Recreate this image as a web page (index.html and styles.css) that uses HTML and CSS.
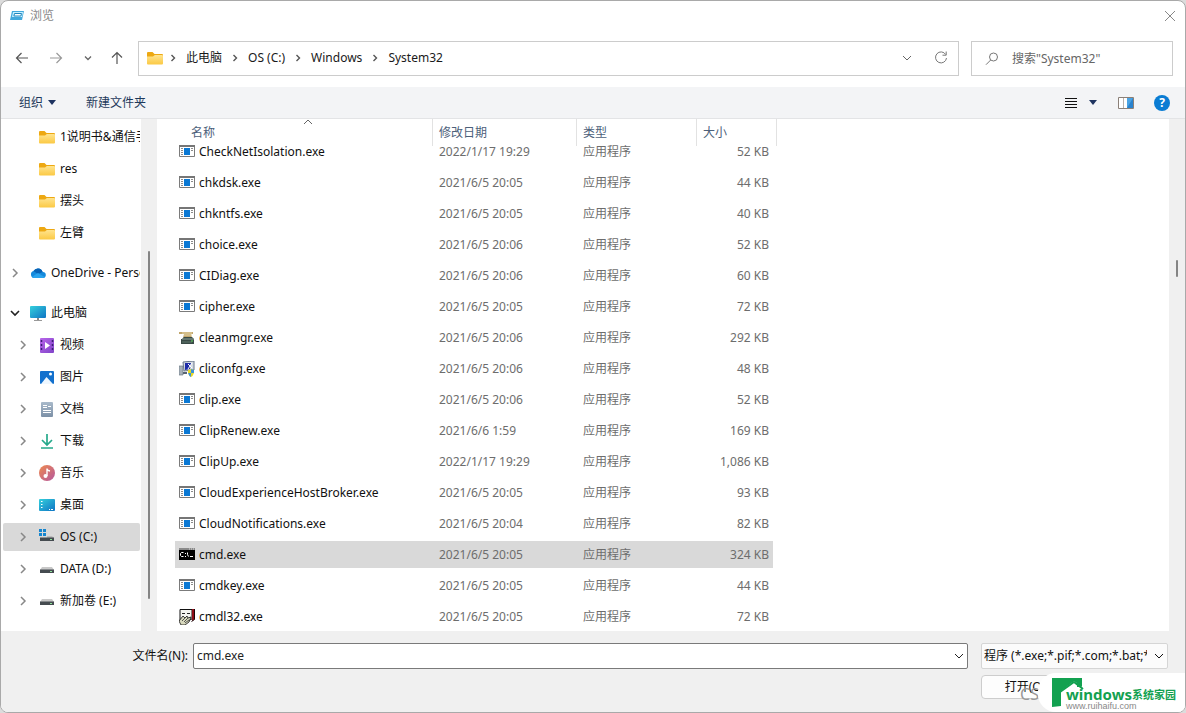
FILE: index.html
```html
<!DOCTYPE html>
<html lang="zh-CN">
<head>
<meta charset="utf-8">
<title>浏览</title>
<link rel="stylesheet" href="styles.css">
</head>
<body>
<svg class="defs" width="0" height="0" aria-hidden="true">
  <defs>
    <linearGradient id="gFolder" x1="0" y1="0" x2="0" y2="1"><stop offset="0" stop-color="#ffe48f"/><stop offset="1" stop-color="#fbc944"/></linearGradient>
    <linearGradient id="gScreen" x1="0" y1="0" x2="1" y2="1"><stop offset="0" stop-color="#35d0dc"/><stop offset="1" stop-color="#0f74c4"/></linearGradient>
    <linearGradient id="gMusic" x1="0" y1="0" x2="1" y2="1"><stop offset="0" stop-color="#ee8a4e"/><stop offset="1" stop-color="#b5579f"/></linearGradient>
    <linearGradient id="gVideo" x1="0" y1="0" x2="1" y2="1"><stop offset="0" stop-color="#b866ea"/><stop offset="1" stop-color="#8044c8"/></linearGradient>
    <linearGradient id="gDoc" x1="0" y1="0" x2="0" y2="1"><stop offset="0" stop-color="#a9bacb"/><stop offset="1" stop-color="#7c90a6"/></linearGradient>
    <symbol id="folder" viewBox="0 0 16 16"><path d="M0 3q0-1 1-1h4.500l2 2H15q1 0 1 1v3H0z" fill="#eda812"/><path d="M0 6.500h6l1.800-1.500H15q1 0 1 1v7.500q0 1-1 1H1q-1 0-1-1z" fill="url(#gFolder)"/></symbol>
    <symbol id="exe" viewBox="0 1 16 16"><path d="M.5 2.500h15v11H.5z" fill="#fff" stroke="#7b7b7b"/><path d="M0 2h16v2H0z" fill="#767676"/><path d="M5 5h6v7H5z" fill="#0a78d4"/><path d="M2 5.500h2M2 7.500h2M2 9.500h2M2 11.500h2M12 5.500h2M12 7.500h2" stroke="#8c8c8c"/></symbol>
    <symbol id="cmd" viewBox="0 1 16 16"><path d="M0 2h16v12H0z" fill="#000"/><path d="M0 2h16v2H0z" fill="#8a8a8a"/><path d="M10 3h1M12 3h1M14 3h1" stroke="#ddd"/><path d="M4.500 6.500H2.500L1.500 7.500v2l1 1h2M6.500 7v1M6.500 10v1M8.500 6.500v2l1 2M11 10.500h3" stroke="#fff" fill="none"/></symbol>
    <symbol id="clean" viewBox="0 0 16 16"><path d="M0 2h14v2h-2l1 4H4l1-4H0z" fill="#c1a66c"/><path d="M3 3h10M5 5h8" stroke="#e8d7a8"/><path d="M3 9l2-2h8l2 2v5H2V9z" fill="#394a46"/><path d="M3 9h12" stroke="#91a49b"/><path d="M3 12h10" stroke="#62786f"/><path d="M12 11h2" stroke="#61d85c"/></symbol>
    <symbol id="conf" viewBox="0 0 16 16"><path d="M0 5h4v9H0z" fill="#a7b0b8" stroke="#6f7c88" stroke-width=".7"/><path d="M4 1l11-1v9l-10 1z" fill="#d4dbe4" stroke="#68768c"/><path d="M6 2h6l-1 6-5 1z" fill="#1e2ba7"/><path d="M9 3l4 4M13 2l-4 6" stroke="#fff"/><path d="M9 9l3-1 3 1v3q-1 3-3 4-2-1-3-4z" fill="#e8d922"/><path d="M12 8l3 1v3h-3zM9 12h3v4q-2-1-3-4z" fill="#3c93d9"/><path d="M4 12h4" stroke="#5a6572" stroke-width="2"/></symbol>
    <symbol id="cmdl" viewBox="0 0 16 16"><path d="M1 .5h12V10l-5 2H1z" fill="#f4f4f0" stroke="#111"/><path d="M13 0h3v10l-3 2z" fill="#8e0d18"/><path d="M15.500 0v10.500l-3 2" fill="none" stroke="#180407"/><path d="M3 4.500h3M8 4.500h3" stroke="#222"/><path d="M0 12l4-5 2 2 2-2 1 2 3-1-2 5-4 3H2z" fill="#d7d8bd" stroke="#111" stroke-width=".8"/><path d="M3 12l3-3M5 13l4-4M6 14l4-3" stroke="#333" stroke-width=".8"/></symbol>
    <symbol id="chev" viewBox="0 0 16 16"><path d="M6 4l4 4-4 4" fill="none" stroke="currentColor" stroke-width="1.500"/></symbol>
    <symbol id="chevSmall" viewBox="0 0 16 16"><path d="M6.500 5l3 3-3 3" fill="none" stroke="currentColor" stroke-width="1.400"/></symbol>
    <symbol id="chevDown" viewBox="0 0 16 16"><path d="M4 6l4 4 4-4" fill="none" stroke="currentColor"/></symbol>
    <symbol id="drive" viewBox="0 0 16 16"><path d="M3 6h10l2 3H1z" fill="#c8c8c8"/><path d="M1 8.500h14V12H1z" fill="#454b50"/><path d="M11 10.500h2" stroke="#8ee39a"/></symbol>
  </defs>
</svg>

<main class="window">
  <header class="titlebar">
    <svg class="icon" viewBox="0 0 16 16"><path d="M3 3h12l-2 9H1z" fill="#42a8dc"/><path d="M4 4h10l-1 5H3z" fill="#c5efff"/><path d="M5.500 5.500h7l-.6 2.500h-7z" fill="#fff" stroke="#1e86be"/></svg>
    <h1 class="title">浏览</h1>
    <button class="plain close" aria-label="关闭"><svg class="icon" viewBox="0 0 16 16"><path d="M3 3l10 10M13 3L3 13" stroke="#888" fill="none"/></svg></button>
  </header>

  <nav class="navbar">
    <div class="history">
      <button class="plain" aria-label="后退"><svg class="icon" viewBox="0 0 16 16"><path d="M14 8H2.500M7.500 3l-5 5 5 5" fill="none" stroke="#555" stroke-width="1.200"/></svg></button>
      <button class="plain" aria-label="前进"><svg class="icon" viewBox="0 0 16 16"><path d="M2 8h11.500M8.500 3l5 5-5 5" fill="none" stroke="#999" stroke-width="1.200"/></svg></button>
      <button class="plain narrow" aria-label="最近位置"><svg class="icon" viewBox="0 0 16 16"><path d="M5 6.500l3 3 3-3" fill="none" stroke="#666" stroke-width="1.300"/></svg></button>
      <button class="plain narrow" aria-label="上移"><svg class="icon" viewBox="0 0 16 16"><path d="M8 14V2.500M3 7.500l5-5 5 5" fill="none" stroke="#555" stroke-width="1.200"/></svg></button>
    </div>
    <div class="address">
      <svg class="icon"><use href="#folder"/></svg>
      <svg class="icon sep first"><use href="#chevSmall"/></svg>
      <a class="crumb" href="#">此电脑</a>
      <svg class="icon sep"><use href="#chevSmall"/></svg>
      <a class="crumb" href="#">OS (C:)</a>
      <svg class="icon sep"><use href="#chevSmall"/></svg>
      <a class="crumb" href="#">Windows</a>
      <svg class="icon sep"><use href="#chevSmall"/></svg>
      <a class="crumb" href="#">System32</a>
      <div class="address-tools">
        <button class="plain" aria-label="历史记录"><svg class="icon"><use href="#chevDown"/></svg></button>
        <button class="plain" aria-label="刷新"><svg class="icon" viewBox="0 0 16 16"><path d="M12.700 4.500A5.500 5.500 0 1 0 13.500 8M13.200 1.500v3.700H9.500" fill="none" stroke="#777"/></svg></button>
      </div>
    </div>
    <label class="search">
      <svg class="icon" viewBox="0 0 16 16"><circle cx="9.500" cy="6" r="4" fill="none" stroke="#777"/><path d="M6.700 9L2 13.700" stroke="#777"/></svg>
      <input type="text" placeholder='搜索"System32"' aria-label="搜索">
    </label>
  </nav>

  <div class="toolbar">
    <button class="plain command">组织 <span class="caret"></span></button>
    <button class="plain command">新建文件夹</button>
    <div class="view-tools">
      <button class="plain" aria-label="视图"><svg class="icon" viewBox="0 0 16 16"><path d="M2 3.500h12M2 6.500h12M2 9.500h12M2 12.500h12" stroke="#111"/></svg></button>
      <button class="plain view-caret" aria-label="更多选项"><span class="caret"></span></button>
      <button class="plain" aria-label="预览窗格"><svg class="icon" viewBox="0 0 16 16"><path d="M.5 2.500h15v11H.5z" fill="#fff" stroke="#8b8078"/><path d="M9 3h6v10H9z" fill="#4ba3e3"/><path d="M9 13l6-10v10z" fill="#2a83ce"/><path d="M5.500 3v10" stroke="#b9b2ad"/></svg></button>
      <button class="plain" aria-label="帮助"><span class="help">?</span></button>
    </div>
  </div>

  <div class="content">
    <aside class="tree">
      <a class="node leaf" href="#"><svg class="icon"><use href="#folder"/></svg><span>1说明书&amp;通信手册</span></a>
      <a class="node leaf" href="#"><svg class="icon"><use href="#folder"/></svg><span>res</span></a>
      <a class="node leaf" href="#"><svg class="icon"><use href="#folder"/></svg><span>摆头</span></a>
      <a class="node leaf" href="#"><svg class="icon"><use href="#folder"/></svg><span>左臂</span></a>
      <a class="node root" href="#"><svg class="icon arrow"><use href="#chev"/></svg><svg class="icon" viewBox="0 0 16 16"><path d="M4 13a3.600 3.600 0 0 1-.5-7A5 5 0 0 1 12.600 7 3 3 0 0 1 13 13z" fill="#1489dc"/><path d="M3.500 6A5 5 0 0 1 12.600 7L8 9z" fill="#0862b5"/><path d="M2 12q4-3 6-4 3 2 7 4-1 1-2 1H4q-1 0-2-1z" fill="#29a3ee"/></svg><span>OneDrive - Personal</span></a>
      <a class="node root" href="#"><svg class="icon arrow expanded" viewBox="0 0 16 16"><path d="M4 6l4 4 4-4" fill="none" stroke="currentColor" stroke-width="1.600"/></svg><svg class="icon" viewBox="0 0 16 16"><rect y="1" width="16" height="12" rx="1" fill="url(#gScreen)"/><path d="M7 13h2v2H7z" fill="#888"/><path d="M4 15.500h8" stroke="#999"/></svg><span>此电脑</span></a>
      <a class="node child" href="#"><svg class="icon arrow"><use href="#chev"/></svg><svg class="icon" viewBox="0 0 16 16"><rect x="1" y="1" width="14" height="15" rx="1" fill="url(#gVideo)"/><path d="M2.500 3v12M13.500 3v12" stroke="#3c1d77" stroke-width="1.500" stroke-dasharray="2 2"/><path d="M6 5l5 3.500L6 12z" fill="#fff"/></svg><span>视频</span></a>
      <a class="node child" href="#"><svg class="icon arrow"><use href="#chev"/></svg><svg class="icon" viewBox="0 0 16 16"><rect x="1" y="2" width="14" height="13" rx="1" fill="#1270cd"/><path d="M2 15l5.500-7L14 15z" fill="#eef7ff"/><circle cx="11.500" cy="5" r="1.500" fill="#fff"/></svg><span>图片</span></a>
      <a class="node child" href="#"><svg class="icon arrow"><use href="#chev"/></svg><svg class="icon" viewBox="0 0 16 16"><rect x="2" y="1" width="12" height="15" rx="1" fill="url(#gDoc)"/><path d="M4 4.500h4M4 6.500h4M9 5.500h3M4 9.500h8M4 11.500h8" stroke="#fff"/></svg><span>文档</span></a>
      <a class="node child" href="#"><svg class="icon arrow"><use href="#chev"/></svg><svg class="icon" viewBox="0 0 16 16"><path d="M8 1v10.500M3 7l5 5 5-5M2 15h12" fill="none" stroke="#25a98b" stroke-width="1.700"/></svg><span>下载</span></a>
      <a class="node child" href="#"><svg class="icon arrow"><use href="#chev"/></svg><svg class="icon" viewBox="0 0 16 16"><circle cx="8" cy="8" r="8" fill="url(#gMusic)"/><path d="M8 3.500v7.500M8 3.500q0 2 3 2.500" stroke="#fff" stroke-width="1.400" fill="none"/><circle cx="6.500" cy="11" r="2" fill="#fff"/></svg><span>音乐</span></a>
      <a class="node child" href="#"><svg class="icon arrow"><use href="#chev"/></svg><svg class="icon" viewBox="0 0 16 16"><rect y="2" width="16" height="12" rx="1" fill="url(#gScreen)"/><path d="M2 4.500h1.500M2 7.500h1.500M2 10.500h1.500M10 12.500h1M12 12.500h2" stroke="#fff"/></svg><span>桌面</span></a>
      <a class="node child selected" href="#"><svg class="icon arrow"><use href="#chev"/></svg><svg class="icon" viewBox="0 0 16 16"><path d="M0 0h3v3H0zM4 0h3v3H4zM0 4h3v3H0zM4 4h3v3H4z" fill="#1585cf"/><path d="M8 7h5l2 2H8z" fill="#bbb"/><path d="M1 8.500h14V12H1z" fill="#454b50"/><path d="M11 10.500h2" stroke="#8ee39a"/></svg><span>OS (C:)</span></a>
      <a class="node child" href="#"><svg class="icon arrow"><use href="#chev"/></svg><svg class="icon"><use href="#drive"/></svg><span>DATA (D:)</span></a>
      <a class="node child" href="#"><svg class="icon arrow"><use href="#chev"/></svg><svg class="icon"><use href="#drive"/></svg><span>新加卷 (E:)</span></a>
    </aside>
    <div class="scroll tree-scroll"><div class="thumb"></div></div>

    <section class="files">
      <table class="list">
        <colgroup><col class="c-name"><col class="c-date"><col class="c-type"><col class="c-size"></colgroup>
        <thead><tr>
          <th><span class="head head-name">名称<svg class="sort" viewBox="0 0 10 6"><path d="M1 5l4-4 4 4" fill="none" stroke="#666"/></svg></span></th>
          <th><span class="head">修改日期</span></th><th><span class="head">类型</span></th><th><span class="head">大小</span></th>
        </tr></thead>
        <tbody>
          <tr><td><span class="file"><svg class="icon"><use href="#exe"/></svg>CheckNetIsolation.exe</span></td><td>2022/1/17 19:29</td><td>应用程序</td><td>52 KB</td></tr>
          <tr><td><span class="file"><svg class="icon"><use href="#exe"/></svg>chkdsk.exe</span></td><td>2021/6/5 20:05</td><td>应用程序</td><td>44 KB</td></tr>
          <tr><td><span class="file"><svg class="icon"><use href="#exe"/></svg>chkntfs.exe</span></td><td>2021/6/5 20:05</td><td>应用程序</td><td>40 KB</td></tr>
          <tr><td><span class="file"><svg class="icon"><use href="#exe"/></svg>choice.exe</span></td><td>2021/6/5 20:06</td><td>应用程序</td><td>52 KB</td></tr>
          <tr><td><span class="file"><svg class="icon"><use href="#exe"/></svg>CIDiag.exe</span></td><td>2021/6/5 20:06</td><td>应用程序</td><td>60 KB</td></tr>
          <tr><td><span class="file"><svg class="icon"><use href="#exe"/></svg>cipher.exe</span></td><td>2021/6/5 20:05</td><td>应用程序</td><td>72 KB</td></tr>
          <tr><td><span class="file"><svg class="icon"><use href="#clean"/></svg>cleanmgr.exe</span></td><td>2021/6/5 20:06</td><td>应用程序</td><td>292 KB</td></tr>
          <tr><td><span class="file"><svg class="icon"><use href="#conf"/></svg>cliconfg.exe</span></td><td>2021/6/5 20:06</td><td>应用程序</td><td>48 KB</td></tr>
          <tr><td><span class="file"><svg class="icon"><use href="#exe"/></svg>clip.exe</span></td><td>2021/6/5 20:06</td><td>应用程序</td><td>52 KB</td></tr>
          <tr><td><span class="file"><svg class="icon"><use href="#exe"/></svg>ClipRenew.exe</span></td><td>2021/6/6 1:59</td><td>应用程序</td><td>169 KB</td></tr>
          <tr><td><span class="file"><svg class="icon"><use href="#exe"/></svg>ClipUp.exe</span></td><td>2022/1/17 19:29</td><td>应用程序</td><td>1,086 KB</td></tr>
          <tr><td><span class="file"><svg class="icon"><use href="#exe"/></svg>CloudExperienceHostBroker.exe</span></td><td>2021/6/5 20:05</td><td>应用程序</td><td>93 KB</td></tr>
          <tr><td><span class="file"><svg class="icon"><use href="#exe"/></svg>CloudNotifications.exe</span></td><td>2021/6/5 20:04</td><td>应用程序</td><td>82 KB</td></tr>
          <tr class="selected"><td><span class="file"><svg class="icon"><use href="#cmd"/></svg>cmd.exe</span></td><td>2021/6/5 20:05</td><td>应用程序</td><td>324 KB</td></tr>
          <tr><td><span class="file"><svg class="icon"><use href="#exe"/></svg>cmdkey.exe</span></td><td>2021/6/5 20:05</td><td>应用程序</td><td>44 KB</td></tr>
          <tr><td><span class="file"><svg class="icon"><use href="#cmdl"/></svg>cmdl32.exe</span></td><td>2021/6/5 20:05</td><td>应用程序</td><td>72 KB</td></tr>
        </tbody>
      </table>
    </section>
    <div class="scroll list-scroll"><div class="thumb"></div></div>
  </div>

  <footer class="footer">
    <label class="name-label" for="filename">文件名(N):</label>
    <div class="combo"><input id="filename" type="text" value="cmd.exe"><button class="plain" aria-label="展开"><svg class="icon"><use href="#chevDown"/></svg></button></div>
    <div class="filter"><select aria-label="文件类型"><option>程序 (*.exe;*.pif;*.com;*.bat;*.cmd)</option></select><svg class="icon"><use href="#chevDown"/></svg></div>
    <button class="open">打开(O)</button>
  </footer>

  <span class="ghost">CS</span>
  <div class="brand">
    <svg class="brand-logo" viewBox="0 0 32 30"><path d="M0 0h30v9l-8-6-13 10v15l-9 1z" fill="#12a150"/><path d="M8 14L22 4l9 7" fill="none" stroke="#12a150" stroke-width="2"/><path d="M25 3h4v6h-4z" fill="#12a150"/></svg>
    <div class="brand-text"><div class="brand-name"><span class="brand-en">windows</span>系统家园</div><div class="brand-url">www.ruihaifu.com</div></div>
  </div>
</main>
</body>
</html>
```

FILE: styles.css
```css
* { box-sizing: border-box; }
body {
  margin: 0;
  background: #dcdcdc;
  color: #111;
  font: 12px/16px "Noto Sans", "Noto Sans CJK SC", sans-serif;
}
.defs { position: absolute; }
a { color: inherit; text-decoration: none; }
button, input, select { font: inherit; color: inherit; }
.icon { display: block; width: 16px; height: 16px; flex: none; }
.plain { display: flex; align-items: center; justify-content: center; padding: 0; border: 0; background: none; }

.window {
  position: relative;
  display: flex;
  flex-direction: column;
  height: 100vh;
  border: 1px solid #a9a9a9;
  border-radius: 8px;
  background: #fff;
  overflow: hidden;
}
.titlebar { display: flex; align-items: center; gap: 5px; height: 30px; padding: 0 7px 0 8px; }
.title { margin: 0; font-size: 12px; font-weight: 400; color: #888; }
.close { margin-left: auto; }

.navbar { display: flex; gap: 12px; height: 56px; padding: 10px 12px 11px 11px; }
.history { display: flex; align-items: center; gap: 14px; width: 114px; padding-bottom: 2px; }
.history .plain { width: 20px; }
.history .narrow { width: 15px; }
.address { display: flex; flex: 1; align-items: center; border: 1px solid #ccc; padding: 0 9px 2px 8px; color: #1a1a1a; }
.sep { margin: 0 5px; color: #555; }
.first { margin-left: 2px; }
.address-tools { display: flex; gap: 18px; margin-left: auto; color: #666; }
.search { display: flex; align-items: center; gap: 12px; width: 202px; padding: 0 12px; border: 1px solid #ccc; }
.search input { flex: 1; min-width: 0; padding: 0; border: 0; outline: 0; background: none; }
.search input::placeholder { color: #666; opacity: 1; }

.toolbar {
  display: flex;
  align-items: center;
  gap: 30px;
  height: 32px;
  padding: 0 15px 0 18px;
  background: #f3f4f6;
  border-bottom: 1px solid #e3e4e6;
  color: #1e395b;
}
.command { gap: 5px; }
.caret { border: 4px solid transparent; border-top: 5px solid #1e3360; border-bottom: 0; }
.view-tools { display: flex; align-items: center; margin-left: auto; }
.view-caret { width: 28px; margin-right: 11px; }
.view-tools .plain:last-child { margin-left: 20px; }
.help { width: 16px; height: 16px; border-radius: 8px; background: #0a7cd3; color: #fff; font-weight: 700; }

.content { display: flex; flex: 1; min-height: 0; background: #f0f0f0; }
.tree { display: flex; flex-direction: column; gap: 4px; width: 140px; padding: 4px 1px 0 2px; background: #fff; overflow: hidden; }
.node { display: flex; flex: none; align-items: center; height: 28px; white-space: nowrap; overflow: hidden; border-radius: 2px; gap: 5px; }
.leaf { padding-left: 36px; }
.root { padding-left: 4px; margin-top: 8px; }
.child { padding-left: 12px; }
.arrow { color: #888; }
.root .arrow { margin-right: 2px; }
.child .arrow { margin-right: 3px; }
.arrow.expanded { color: #222; }
.selected.node { background: #d9d9d9; }
.scroll { width: 16px; background: #f0f0f0; }
.thumb { width: 2px; margin-left: 7px; border-radius: 1px; background: #858585; }
.tree-scroll { padding-top: 132px; }
.tree-scroll .thumb { height: 348px; }
.list-scroll { padding-top: 141px; }
.list-scroll .thumb { height: 17px; }

.files { flex: 1; min-width: 0; padding-left: 18px; background: #fff; overflow: hidden; }
.list { width: 602px; table-layout: fixed; border-spacing: 0; color: #6d6d6d; }
.c-name { width: 258px; }
.c-date { width: 144px; }
.c-type { width: 120px; }
.c-size { width: 80px; }
th { height: 17px; padding: 0; vertical-align: top; text-align: left; font-weight: 400; color: #4c607a; }
.head { display: block; position: relative; height: 27px; margin-bottom: -10px; padding-left: 6px; border-right: 1px solid #e2e2e2; line-height: 27px; }
.head-name { padding-left: 16px; }
.sort { position: absolute; left: 128px; top: 0; width: 10px; height: 6px; }
td { height: 31px; padding: 0 0 0 6px; border: solid transparent; border-width: 2px 0; background-clip: padding-box; white-space: nowrap; }
td:first-child { padding-left: 4px; color: #111; border-radius: 2px; }
td:last-child { padding: 0 4px 0 0; border-right-width: 4px; text-align: right; }
tr.selected td { background-color: #d9d9d9; }
.file { display: flex; align-items: center; gap: 4px; }

.footer {
  display: grid;
  grid-template-columns: 187px 1fr 187px;
  grid-template-rows: 26px 24px;
  gap: 6px 0;
  padding: 12px 17px 13px 0;
  background: #f0f0f0;
}
.name-label { align-self: center; justify-self: end; }
.combo { display: flex; align-items: center; margin: 0 13px 0 5px; border: 1px solid #7a7a7a; border-radius: 2px; background: #fff; color: #222; }
.combo input { flex: 1; min-width: 0; padding: 0 3px; border: 0; outline: 0; background: none; }
.filter { position: relative; display: flex; border: 1px solid #d5d5d5; border-radius: 2px; background: #fbfbfb; }
.filter select { appearance: none; flex: 1; min-width: 0; margin-right: 20px; padding: 0 0 0 2px; border: 0; background: none; overflow: hidden; }
.filter .icon { position: absolute; right: 0; top: 4px; }
.open { grid-column: 3; width: 88px; padding: 0; border: 1px solid #cdcdcd; border-radius: 4px; background: #fdfdfd; }
.ghost { position: absolute; right: 146px; bottom: 8px; color: #999; font-size: 16px; line-height: 20px; }
.brand { position: absolute; right: 0; bottom: 0; display: flex; width: 147px; height: 39px; padding: 5px 0 0 14px; border-radius: 18px 0 0 18px; background: #fff; }
.brand-logo { width: 32px; height: 30px; flex: none; }
.brand-text { margin-left: -18px; padding-top: 8px; }
.brand-name { display: flex; align-items: center; font: 700 11px/16px "Noto Sans CJK SC", sans-serif; color: #12a150; white-space: nowrap; }
.brand-en { font: 700 15px/16px "Noto Sans", sans-serif; }
.brand-url { font: 9px/9px "Liberation Sans", sans-serif; color: #888; }
```
